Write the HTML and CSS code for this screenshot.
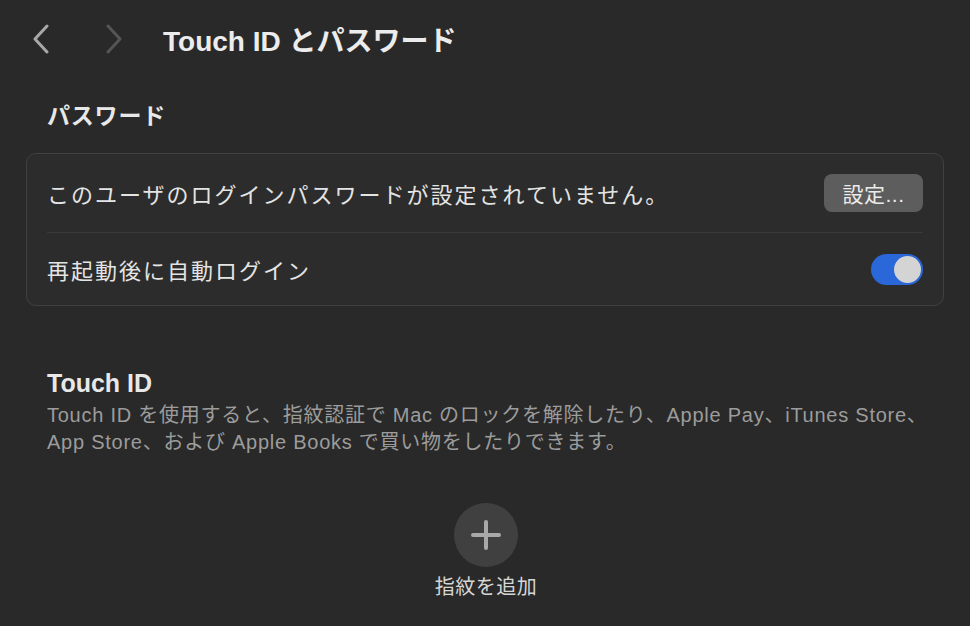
FILE: index.html
```html
<!DOCTYPE html>
<html lang="ja">
<head>
    <meta charset="UTF-8">
    <meta name="viewport" content="width=device-width, initial-scale=1.0">
    <title>Touch IDとパスワード</title>
    <link rel="stylesheet" href="styles.css">
</head>
<body>

<div class="toolbar">
    <button class="nav-button" aria-label="戻る">
        <svg width="24" height="30" viewBox="0 0 24 30"><path d="M17 2 L5 15 L17 28" fill="none" stroke="#a8a8a8" stroke-width="3" stroke-linecap="round" stroke-linejoin="round"/></svg>
    </button>
    <button class="nav-button nav-forward" aria-label="進む">
        <svg width="24" height="30" viewBox="0 0 24 30"><path d="M6 2 L18 15 L6 28" fill="none" stroke="#555555" stroke-width="3" stroke-linecap="round" stroke-linejoin="round"/></svg>
    </button>
    <h1>Touch ID とパスワード</h1>
</div>

<div class="content">
    <h2 class="section-title">パスワード</h2>

    <div class="group-box">
        <div class="row first-row">
            <span>このユーザのログインパスワードが設定されていません。</span>
            <button class="set-button">設定...</button>
        </div>
        <div class="separator"></div>
        <div class="row">
            <span>再起動後に自動ログイン</span>
            <div class="toggle on"><div class="knob"></div></div>
        </div>
    </div>

    <h2 class="touch-title">Touch ID</h2>
    <p class="description">Touch ID を使用すると、指紋認証で Mac のロックを解除したり、Apple Pay、iTunes Store、<br>App Store、および Apple Books で買い物をしたりできます。</p>

    <div class="add-finger">
        <button class="add-button" aria-label="指紋を追加">
            <svg width="30" height="30" viewBox="0 0 30 30"><path d="M15 2 V28 M2 15 H28" stroke="#a9a9a9" stroke-width="4" stroke-linecap="round"/></svg>
        </button>
        <div class="add-label">指紋を追加</div>
    </div>
</div>

</body>
</html>
```

FILE: styles.css
```css
body {
    margin: 0;
    padding: 0;
    background-color: #292929;
    color: #e6e6e6;
    font-family: "Liberation Sans", "Noto Sans CJK JP", sans-serif;
}

button {
    font-family: inherit;
}

.toolbar {
    display: flex;
    align-items: center;
    height: 78px;
    padding-left: 30px;
}

.nav-button {
    background: none;
    border: none;
    padding: 0;
    width: 24px;
    height: 30px;
    display: flex;
}

.nav-forward {
    margin-left: 48px;
}

.toolbar h1 {
    margin: 0 0 0 37px;
    font-size: 28px;
    font-weight: bold;
    color: #ececec;
    letter-spacing: 0;
}

.content {
    padding: 0 26px 0 26px;
}

.section-title {
    margin: 23px 0 22px 21px;
    font-size: 23px;
    line-height: 30px;
    font-weight: bold;
    color: #e8e8e8;
    letter-spacing: 0.8px;
}

.group-box {
    border: 1px solid #414141;
    border-radius: 10px;
    background-color: #2c2c2c;
}

.row {
    display: flex;
    align-items: center;
    justify-content: space-between;
    min-height: 72px;
    padding: 0 20px;
    font-size: 22px;
    letter-spacing: 2px;
    color: #e4e4e4;
}

.first-row {
    min-height: 78px;
}

.separator {
    height: 1px;
    margin: 0 20px;
    background-color: #3a3a3a;
}

.set-button {
    width: 99px;
    height: 38px;
    border: none;
    border-radius: 8px;
    background-color: #5d5d5d;
    color: #ececec;
    font-size: 21px;
    letter-spacing: 0.5px;
    padding: 0;
}

.toggle {
    position: relative;
    width: 52px;
    height: 31px;
    border-radius: 16px;
    background-color: #2a67d8;
}

.toggle .knob {
    position: absolute;
    top: 2px;
    right: 2px;
    width: 27px;
    height: 27px;
    border-radius: 50%;
    background-color: #d4d4d4;
}

.touch-title {
    margin: 62px 0 0 21px;
    font-size: 25px;
    line-height: 30px;
    font-weight: bold;
    color: #e8e8e8;
}

.description {
    margin: 4px 0 0 21px;
    font-size: 20px;
    line-height: 27px;
    color: #9c9c9c;
    letter-spacing: 0.75px;
    white-space: nowrap;
}

.add-finger {
    display: flex;
    flex-direction: column;
    align-items: center;
    margin-top: 47px;
    margin-left: 2px;
}

.add-button {
    width: 64px;
    height: 64px;
    border-radius: 50%;
    border: none;
    background-color: #404040;
    display: flex;
    align-items: center;
    justify-content: center;
    padding: 0;
}

.add-label {
    margin-top: 7px;
    font-size: 20px;
    line-height: 26px;
    color: #d6d6d6;
    letter-spacing: 0.5px;
}
```
